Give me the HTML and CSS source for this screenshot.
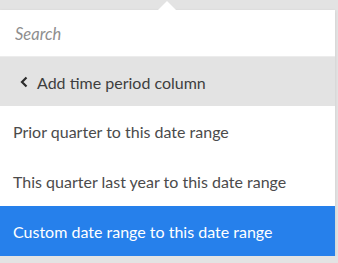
FILE: index.html
```html
<!DOCTYPE html>
<html lang="en">
<head>
  <meta charset="UTF-8" />
  <meta name="viewport" content="width=device-width, initial-scale=1" />
  <title>Add time period column</title>
  <link rel="stylesheet" href="styles.css">
</head>
<body>

<div class="popover">
  <input class="search" type="text" placeholder="Search" />
  <div class="back">
    <svg class="chevron" width="8" height="12" viewBox="0 0 8 12"><path d="M6.5 1.5 L2 6 L6.5 10.5" fill="none" stroke="#2c2c2c" stroke-width="2.2" /></svg>
    <span>Add time period column</span>
  </div>
  <ul class="menu">
    <li>Prior quarter to this date range</li>
    <li>This quarter last year to this date range</li>
    <li class="selected">Custom date range to this date range</li>
  </ul>
</div>

</body>
</html>
```

FILE: styles.css
```css
body { margin: 0; background: #e3e3e3; font-family: Lato, "Open Sans", sans-serif; color: #4b4b4b; }
.popover { position: relative; width: 335px; margin-top: 10px; background: #fff; box-shadow: 0 1px 3px rgba(0,0,0,0.12); }
.popover::before { content: ""; position: absolute; left: 158px; top: -9px; border-left: 9px solid transparent; border-right: 9px solid transparent; border-bottom: 9px solid #fff; }
.search { display: block; box-sizing: border-box; width: 100%; height: 46px; border: none; outline: none; padding: 1px 15px 0; font-family: inherit; font-size: 16.5px; font-style: italic; background: #fff; }
.search::placeholder { color: #8e8e8e; }
.back { display: flex; align-items: center; gap: 9px; height: 50px; padding: 1px 20px 0; background: #e3e3e3; border-top: 1px solid #ececec; box-sizing: border-box; font-size: 16px; color: #3e3e3e; }
.menu { list-style: none; margin: 0; padding: 0; }
.menu li { display: flex; align-items: center; height: 50px; padding: 1px 13px 0; box-sizing: border-box; font-size: 16px; }
.menu li.selected { background: #2680eb; color: #fff; }
```
